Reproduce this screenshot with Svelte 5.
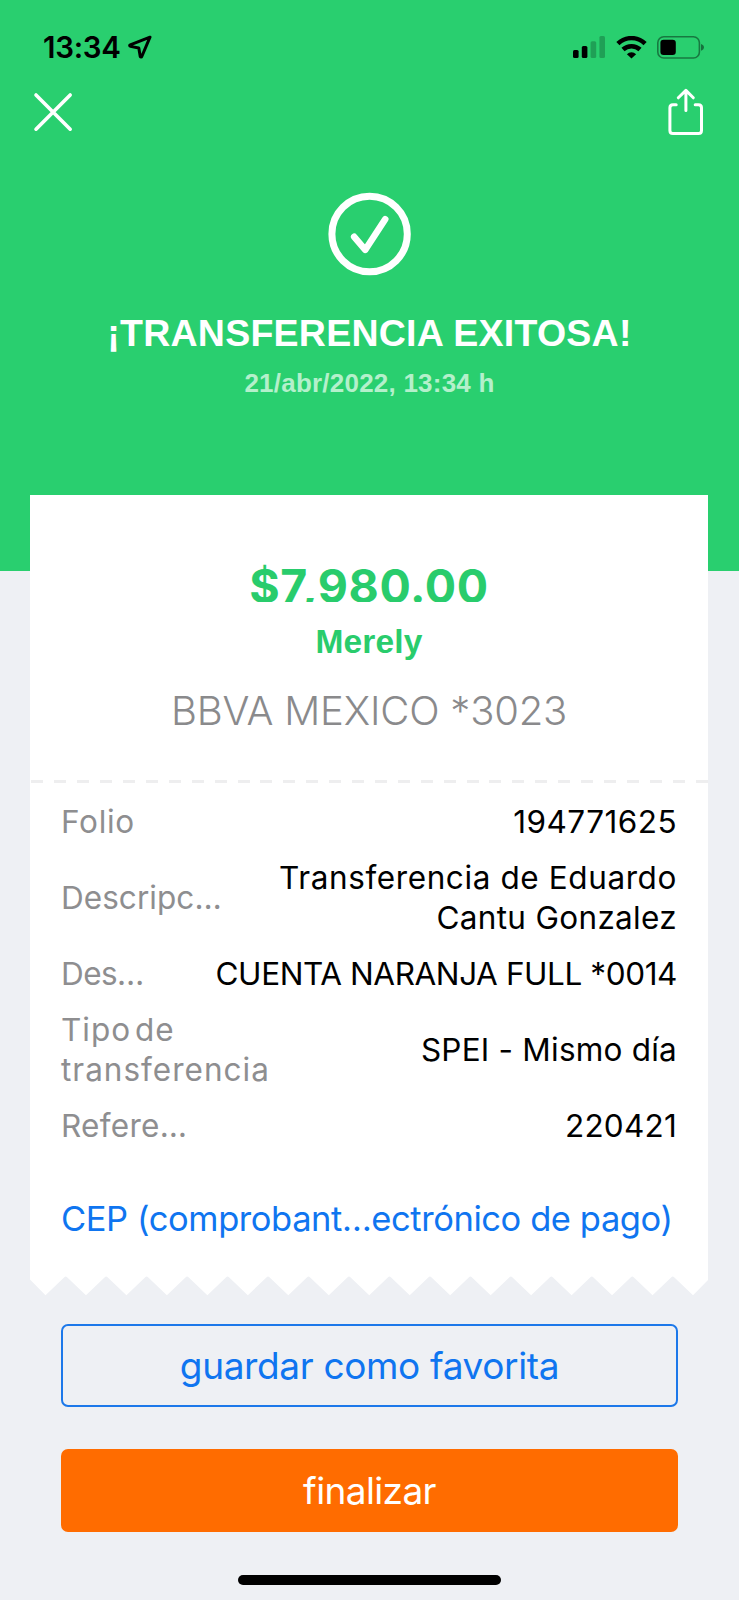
<script lang="ts">
	type Detail = {
		label: string;
		value: { text: string; tracking: number }[];
		tracking: number;
	};

	const details: Detail[] = [
		{ label: 'Folio', value: [{ text: '194771625', tracking: 0.44 }], tracking: 0.7 },
		{
			label: 'Descripc…',
			value: [
				{ text: 'Transferencia de Eduardo', tracking: 0.6 },
				{ text: 'Cantu Gonzalez', tracking: 0.32 }
			],
			tracking: 0.05
		},
		{
			label: 'Des…',
			value: [{ text: 'CUENTA NARANJA FULL *0014', tracking: -0.41 }],
			tracking: -0.6
		},
		{
			label: 'Tipo de transferencia',
			value: [{ text: 'SPEI - Mismo día', tracking: 0.22 }],
			tracking: 1
		},
		{ label: 'Refere…', value: [{ text: '220421', tracking: 0.23 }], tracking: 0.3 }
	];

	// Torn receipt edge: 17 teeth, tips 40.47 apart
	const teeth = Array.from({ length: 17 }, (_, i) => 15.5 + i * 40.47);
	const edge =
		'M0 0V3.5' +
		teeth
			.map((x, i) => `L${x} 19.2` + (i < 16 ? `L${x + 18.8} 1.2Q${x + 20.2} 0 ${x + 21.6} 1.2` : ''))
			.join('') +
		'L678 4V0Z';
</script>

<main>
	<header>
		<div class="status-bar">
			<div class="clock">
				<span>13:34</span>
				<svg width="24" height="24" viewBox="0 0 24 24" fill="none">
					<path
						d="M22 2.2L2.2 9.8C1.4 10.1 1.5 11.2 2.4 11.4L10.8 13L12.2 21.3C12.4 22.2 13.5 22.3 13.8 21.5Z"
						stroke="#000"
						stroke-width="3"
						stroke-linejoin="round"
					/>
				</svg>
			</div>
			<div class="indicators">
				<svg width="32" height="22" viewBox="0 0 32 22">
					<rect x="0" y="14" width="5.6" height="8" rx="1.5" />
					<rect x="8.8" y="10" width="5.6" height="12" rx="1.5" />
					<g opacity="0.22">
						<rect x="17.6" y="5.2" width="5.6" height="16.8" rx="1.5" />
						<rect x="26.4" y="0" width="5.6" height="22" rx="1.5" />
					</g>
				</svg>
				<svg width="31" height="23" viewBox="0 0 31 23" fill="none" stroke="#000" stroke-width="4.5">
					<path d="M1.9 7.6A19.6 19.6 0 0 1 29.1 7.6" />
					<path d="M7 13.5A12.4 12.4 0 0 1 24 13.5" />
					<path d="M15.5 22.6L10.9 18.2A6.6 6.6 0 0 1 20.1 18.2Z" fill="#000" stroke="none" />
				</svg>
				<svg width="48" height="23" viewBox="0 0 48 23">
					<rect
						x="0.8"
						y="0.8"
						width="41.6"
						height="21.2"
						rx="6"
						fill="none"
						stroke="#000"
						stroke-opacity="0.42"
						stroke-width="1.6"
					/>
					<rect x="3.4" y="3.8" width="15.4" height="15.2" rx="3.2" />
					<path d="M44 8C46.4 8.7 46.9 10 46.9 11.3S46.4 14 44 14.7Z" opacity="0.45" />
				</svg>
			</div>
		</div>

		<nav>
			<button type="button" aria-label="Cerrar">
				<svg width="40" height="40" viewBox="0 0 40 40" fill="none">
					<path
						d="M3 2.9L37.2 37.2M37.2 2.9L3 37.2"
						stroke="#fff"
						stroke-width="3.6"
						stroke-linecap="round"
					/>
				</svg>
			</button>
			<button type="button" aria-label="Compartir">
				<svg
					width="36"
					height="48"
					viewBox="0 0 36 48"
					fill="none"
					stroke="#fff"
					stroke-width="3"
					stroke-linecap="round"
					stroke-linejoin="round"
				>
					<path
						d="M8.2 16.7H4.9Q1.9 16.7 1.9 19.7V42.4Q1.9 45.4 4.9 45.4H30.5Q33.5 45.4 33.5 42.4V19.7Q33.5 16.7 30.5 16.7H27.2"
					/>
					<path d="M17.9 22.4V2.6M10.3 9.8L17.9 2.4L25.3 9.8" />
				</svg>
			</button>
		</nav>

		<svg class="check" width="84" height="84" viewBox="0 0 84 84" fill="none" stroke="#fff">
			<circle cx="41.6" cy="42" r="37.7" stroke-width="7" />
			<path
				d="M26.2 44.8L37.3 57.8L57.2 27.2"
				stroke-width="6.6"
				stroke-linecap="round"
				stroke-linejoin="round"
			/>
		</svg>
		<h1>¡TRANSFERENCIA EXITOSA!</h1>
		<p class="date">21/abr/2022, 13:34 h</p>
	</header>

	<article>
		<div class="receipt">
			<div class="amount">$7,980.00</div>
			<div class="payee">Merely</div>
			<div class="account">BBVA MEXICO *3023</div>
			<div class="divider"></div>
			<dl>
				{#each details as detail}
					<div class="row">
						<dt style:letter-spacing="{detail.tracking}px">{detail.label}</dt>
						<dd>
							{#each detail.value as line}
								<span style:letter-spacing="{line.tracking}px">{line.text}</span>
							{/each}
						</dd>
					</div>
				{/each}
			</dl>
			<a href="#cep">CEP (comprobant…ectrónico de pago)</a>
		</div>
		<svg class="edge" width="678" height="20" viewBox="0 0 678 20">
			<path d={edge} fill="#fff" />
		</svg>
	</article>

	<div class="actions">
		<button type="button" class="action outline">guardar como favorita</button>
		<button type="button" class="action primary">finalizar</button>
	</div>
	<div class="home-indicator"></div>
</main>

<style>
	:global(body) {
		margin: 0;
		background: #eef0f4;
	}

	main {
		display: flex;
		flex-direction: column;
		height: 1600px;
		overflow: hidden;
		background: #eef0f4;
		font-family: Inter, 'Liberation Sans', sans-serif;
	}

	header {
		display: flex;
		flex-direction: column;
		align-items: center;
		flex: none;
		box-sizing: border-box;
		height: 571px;
		padding-top: 29px;
		background: #29cf6f;
	}

	.status-bar,
	nav {
		display: flex;
		align-items: center;
		justify-content: space-between;
		align-self: stretch;
	}

	.status-bar {
		height: 36px;
		padding: 0 34px 0 43px;
	}

	.clock {
		display: flex;
		align-items: center;
		gap: 7px;
		font-size: 29.5px;
		font-weight: 600;
		line-height: 36px;
		letter-spacing: -0.3px;
	}

	.indicators {
		display: flex;
		align-items: center;
		gap: 10.5px;
	}

	nav {
		height: 48px;
		margin-top: 23px;
		padding: 0 35px 0 33px;
	}

	button {
		padding: 0;
		border: none;
		background: none;
		font-family: inherit;
		cursor: pointer;
	}

	svg {
		display: block;
	}

	.check {
		margin-top: 56px;
	}

	h1 {
		margin: 34px 0 0;
		color: #fff;
		font: bold 37.5px/46px 'Liberation Sans', sans-serif;
		letter-spacing: 0.24px;
	}

	.date {
		margin: 11px 0 0;
		color: #b4f0cb;
		font: bold 26px/32px 'Liberation Sans', sans-serif;
		letter-spacing: 0.22px;
	}

	article {
		width: 678px;
		margin: -76px 0 0 30px;
		flex: none;
	}

	.receipt {
		height: 781px;
		box-sizing: border-box;
		padding-top: 62px;
		background: #fff;
		text-align: center;
	}

	/* the box is shorter than its line, so the digits lose their feet */
	.amount {
		height: 44.5px;
		overflow: hidden;
		color: #29cc6c;
		font-size: 46.5px;
		font-weight: 650;
		line-height: 58px;
		letter-spacing: 0.6px;
	}

	.payee {
		margin-top: 20px;
		color: #29cc6c;
		font: bold 33.5px/40px 'Liberation Sans', sans-serif;
		letter-spacing: 0.15px;
	}

	.account {
		margin-top: 24.5px;
		color: #8a8a8c;
		font-size: 40px;
		font-weight: 350;
		line-height: 50px;
		letter-spacing: -0.2px;
	}

	.divider {
		height: 3px;
		margin-top: 44px;
		background: repeating-linear-gradient(
			to right,
			transparent 0 1.5px,
			#eeeeef 1.5px 13.5px,
			transparent 13.5px 22.9px
		);
	}

	dl {
		display: flex;
		flex-direction: column;
		gap: 15.3px;
		margin: 19.2px 31px 0;
		font-size: 31.5px;
		line-height: 40.4px;
	}

	.row {
		display: flex;
		align-items: center;
		justify-content: space-between;
	}

	dt {
		max-width: 215px;
		color: #8e8e90;
		text-align: left;
		word-spacing: -6px;
	}

	dd {
		margin: 0;
		color: #000;
		text-align: right;
		white-space: nowrap;
	}

	dd span {
		display: block;
	}

	a {
		display: block;
		margin: 50.5px 0 0 31px;
		color: #0f75f0;
		font-size: 34.5px;
		line-height: 44px;
		letter-spacing: -0.42px;
		text-align: left;
		text-decoration: none;
		white-space: nowrap;
	}

	.actions {
		display: flex;
		flex-direction: column;
		gap: 42px;
		margin: 28px 61px 0;
	}

	.action {
		box-sizing: border-box;
		height: 83px;
		border-radius: 7px;
		font-size: 37px;
	}

	.outline {
		border: 2px solid #1c78ea;
		color: #0f75f0;
		letter-spacing: -0.36px;
	}

	.primary {
		background: #ff6c00;
		color: #fff;
		letter-spacing: -0.62px;
	}

	.home-indicator {
		width: 263px;
		height: 9.5px;
		margin: 43px auto 0;
		border-radius: 5px;
		background: #000;
	}
</style>
